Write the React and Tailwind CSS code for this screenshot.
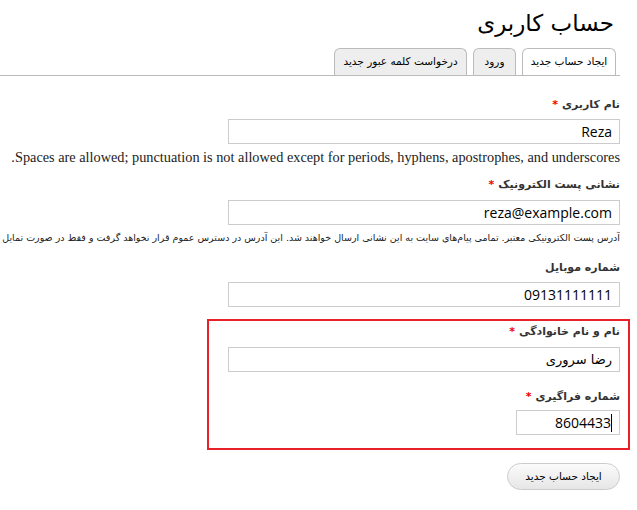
import React from 'react';

const Label = ({ children, required }) => (
    <label className="block text-[11px] font-bold text-[#333] leading-[14px] [font-family:'DejaVu_Sans',sans-serif]">
        {children}
        {required && <span className="text-[#e00] mr-[4px]">*</span>}
    </label>
);

const Field = ({ value, className = '', persian }) => (
    <div
        className={`h-[25px] border border-[#ccc] bg-white flex items-center px-[7px] text-black ${persian ? "[font-family:'DejaVu_Sans',sans-serif] text-[13px]" : "[font-family:'Open_Sans','DejaVu_Sans',sans-serif] text-[14px]"} ${className}`}
    >
        {value}
    </div>
);

export default function App() {
    return (
        <div dir="rtl" className="w-[637px] h-[510px] overflow-hidden bg-white text-[#222] [font-family:'DejaVu_Sans',sans-serif]">
            {/* Title */}
            <h1 className="pr-[23px] pt-[7px] text-[23px] leading-[32px] text-black font-normal">حساب کاربری</h1>

            {/* Tabs */}
            <div className="mt-[10px] mr-[17px] border-b border-[#bbb] flex items-end gap-[6px] pr-[4px] h-[27px]">
                <div className="h-[27px] w-[94px] flex items-center justify-center bg-white border border-b-0 border-[#bbb] rounded-t-[6px] text-[10.5px] text-black">
                    ایجاد حساب جدید
                </div>
                <div className="h-[27px] w-[43px] flex items-center justify-center bg-[#eee] border border-b-0 border-[#bbb] rounded-t-[6px] text-[10.5px] text-black">
                    ورود
                </div>
                <div className="h-[27px] w-[133px] flex items-center justify-center bg-[#eee] border border-b-0 border-[#bbb] rounded-t-[6px] text-[10.5px] text-black">
                    درخواست کلمه عبور جدید
                </div>
            </div>

            {/* Form */}
            <div className="mr-[17px] pt-[22px]">
                <Label required>نام کاربری</Label>
                <Field value="Reza" className="mt-[7px] w-[392px]" />
                <p className="mt-[5px] text-[14.3px] leading-[16px] text-[#222] whitespace-nowrap [font-family:'Liberation_Serif',serif]">
                    Spaces are allowed; punctuation is not allowed except for periods, hyphens, apostrophes, and underscores.
                </p>

                <div className="mt-[13px]">
                    <Label required>نشانی پست الکترونیک</Label>
                    <Field value="reza@example.com" className="mt-[8px] w-[392px]" />
                    <div className="w-[620px] overflow-hidden">
                        <p className="mt-[6px] text-[9.5px] leading-[14px] whitespace-nowrap">
                            آدرس پست الکترونیکی معتبر. تمامی پیام‌های سایت به این نشانی ارسال خواهند شد. این آدرس در دسترس عموم قرار نخواهد گرفت و فقط در صورت تمایل شما، از آن برای دریافت اطلاعیه‌ها استفاده خواهد شد.
                        </p>
                    </div>
                </div>

                <div className="mt-[16px]">
                    <Label>شماره موبایل</Label>
                    <Field value="09131111111" className="mt-[7px] w-[392px]" />
                </div>
            </div>

            {/* Highlighted box */}
            <div className="mt-[12px] mr-[7px] w-[423px] h-[131px] border-[2px] border-[#e8202a] pr-[8px] pt-[4px]">
                <Label required>نام و نام خانوادگی</Label>
                <Field value="رضا سروری" persian className="mt-[8px] w-[392px]" />
                <div className="mt-[18px]">
                    <Label required>شماره فراگیری</Label>
                    <div className="mt-[6px] w-[104px] h-[25px] border border-[#ccc] bg-white flex items-center px-[7px] text-[14px] text-black [font-family:'Open_Sans',sans-serif]">
                        <span className="w-[1px] h-[18px] bg-black"></span>
                        <span>8604433</span>
                    </div>
                </div>
            </div>

            {/* Submit */}
            <div className="mr-[17px] mt-[13px]">
                <button className="h-[27px] w-[113px] rounded-full border border-[#ccc] bg-linear-to-b from-[#fbfbfb] to-[#e6e6e6] text-[10.5px] text-black">
                    ایجاد حساب جدید
                </button>
            </div>
        </div>
    );
}
